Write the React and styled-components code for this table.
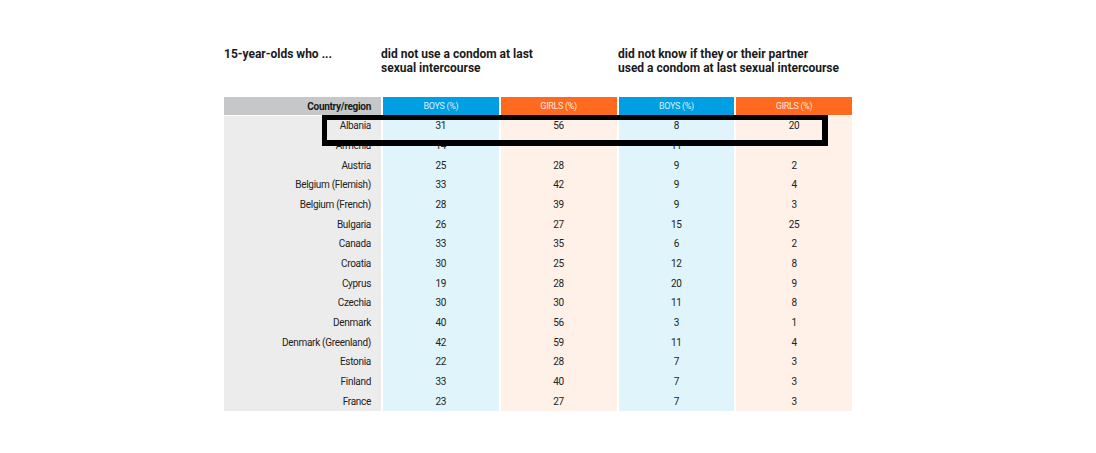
import React from 'react';
import styled, { createGlobalStyle } from 'styled-components';

const Global = createGlobalStyle`
  body {
    margin: 0;
    background: #fff;
    font-family: Roboto, "Liberation Sans", sans-serif;
  }
`;

const rows = [
    ['Albania', 31, 56, 8, 20],
    ['Armenia', 14, '–', 11, '–'],
    ['Austria', 25, 28, 9, 2],
    ['Belgium (Flemish)', 33, 42, 9, 4],
    ['Belgium (French)', 28, 39, 9, 3],
    ['Bulgaria', 26, 27, 15, 25],
    ['Canada', 33, 35, 6, 2],
    ['Croatia', 30, 25, 12, 8],
    ['Cyprus', 19, 28, 20, 9],
    ['Czechia', 30, 30, 11, 8],
    ['Denmark', 40, 56, 3, 1],
    ['Denmark (Greenland)', 42, 59, 11, 4],
    ['Estonia', 22, 28, 7, 3],
    ['Finland', 33, 40, 7, 3],
    ['France', 23, 27, 7, 3],
];

const Page = styled.div`
  width: 1096px;
  height: 453px;
  padding: 47px 0 0 224px;
  box-sizing: border-box;
`;

const Figure = styled.div`
  position: relative;
  width: 628px;
`;

const Titles = styled.div`
  display: grid;
  grid-template-columns: 157px 237px 234px;
  height: 50px;
`;

const Title = styled.div`
  font-size: 12px;
  font-weight: 700;
  line-height: 14px;
  color: #1a1a1a;
`;

const Table = styled.div`
  display: grid;
  grid-template-columns: 157px repeat(4, 1fr);
  column-gap: 2px;
`;

const HeadCell = styled.div`
  height: 18px;
  margin-bottom: 1px;
  display: flex;
  align-items: center;
  justify-content: ${p => (p.$country ? 'flex-end' : 'center')};
  padding-right: ${p => (p.$country ? 10 : 0)}px;
  background: ${p => p.$bg};
  color: ${p => (p.$country ? '#1a1a1a' : 'rgba(255,255,255,0.85)')};
  font-size: ${p => (p.$country ? 10 : 9)}px;
  font-weight: ${p => (p.$country ? 700 : 400)};
  letter-spacing: -0.3px;
`;

const Cell = styled.div`
  height: 19.67px;
  display: flex;
  align-items: center;
  justify-content: ${p => (p.$country ? 'flex-end' : 'center')};
  padding-right: ${p => (p.$country ? 10 : 0)}px;
  background: ${p => p.$bg};
  color: #222;
  font-size: 10px;
  letter-spacing: -0.3px;
`;

const Highlight = styled.div`
  position: absolute;
  left: 98px;
  top: 68px;
  width: 506px;
  height: 31px;
  box-sizing: border-box;
  border: 5px solid #000;
  border-right-width: 6px;
  border-bottom-width: 6px;
`;

const BLUE = '#009fe3';
const ORANGE = '#ff6a1f';
const LIGHT_BLUE = '#e0f4fb';
const LIGHT_ORANGE = '#fff0e8';
const bodyBg = [LIGHT_BLUE, LIGHT_ORANGE, LIGHT_BLUE, LIGHT_ORANGE];

export default function App() {
    return (
        <Page>
            <Global />
            <Figure>
                <Titles>
                    <Title>15-year-olds who ...</Title>
                    <Title>did not use a condom at last<br />sexual intercourse</Title>
                    <Title>did not know if they or their partner<br />used a condom at last sexual intercourse</Title>
                </Titles>
                <Table>
                    <HeadCell $country $bg="#c6c7c8">Country/region</HeadCell>
                    <HeadCell $bg={BLUE}>BOYS (%)</HeadCell>
                    <HeadCell $bg={ORANGE}>GIRLS (%)</HeadCell>
                    <HeadCell $bg={BLUE}>BOYS (%)</HeadCell>
                    <HeadCell $bg={ORANGE}>GIRLS (%)</HeadCell>
                    {rows.map(([name, ...vals]) => (
                        <React.Fragment key={name}>
                            <Cell $country $bg="#ececec">{name}</Cell>
                            {vals.map((v, i) => (
                                <Cell key={i} $bg={bodyBg[i]}>{v}</Cell>
                            ))}
                        </React.Fragment>
                    ))}
                </Table>
                <Highlight />
            </Figure>
        </Page>
    );
}
